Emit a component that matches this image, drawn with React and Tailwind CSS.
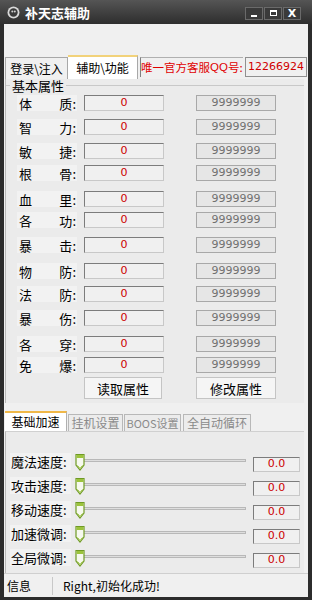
import React from "react";

const CN = { fontFamily: '"Noto Sans CJK SC", "Noto Sans", sans-serif' };
const NUM = { fontFamily: '"DejaVu Sans", "Liberation Sans", sans-serif' };
const LIB = { fontFamily: '"Liberation Sans", sans-serif' };

const attrs = [
  ["体", "质", "mt-[4px]"],
  ["智", "力", "mt-[8px]"],
  ["敏", "捷", "mt-[8px]"],
  ["根", "骨", "mt-[6px]"],
  ["血", "里", "mt-[10px]"],
  ["各", "功", "mt-[5px]"],
  ["暴", "击", "mt-[9px]"],
  ["物", "防", "mt-[10px]"],
  ["法", "防", "mt-[7px]"],
  ["暴", "伤", "mt-[8px]"],
  ["各", "穿", "mt-[10px]"],
  ["免", "爆", "mt-[5px]"],
];

const speeds = ["魔法速度:", "攻击速度:", "移动速度:", "加速微调:", "全局微调:"];

function Thumb() {
  return (
    <svg width="10" height="18" viewBox="0 0 10 18" className="absolute left-[-1px] top-0">
      <path d="M1 1.5 H9 V12 L5 17 L1 12 Z" fill="#f6f9ee" stroke="#6f9a24" strokeWidth="1.2" />
      <rect x="1.6" y="2" width="6.8" height="3" fill="#9cc43c" />
      <path d="M2.5 12.5 L5 15.5 L7.5 12.5" fill="none" stroke="#9cc43c" strokeWidth="1" />
    </svg>
  );
}

export default function App() {
  return (
    <div className="w-[312px] h-[600px] bg-[#2c2c2c] flex flex-col overflow-hidden" style={CN}>
      {/* title bar */}
      <div className="h-[25px] flex items-center bg-gradient-to-b from-[#555555] to-[#2e2e2e] relative">
        <svg width="13" height="13" viewBox="0 0 13 13" className="ml-[7px]">
          <circle cx="6.5" cy="6.5" r="6" fill="#d8d8d8" />
          <circle cx="6.5" cy="6.5" r="4.2" fill="#3a3a3a" />
          <circle cx="5.3" cy="5.5" r="1" fill="#cfcfcf" />
          <circle cx="7.8" cy="5.5" r="1" fill="#cfcfcf" />
        </svg>
        <span className="ml-[5px] text-white text-[13px] font-bold leading-none">补天志辅助</span>
        <div className="ml-auto mr-[11px] flex gap-[1px] mt-[2px]">
          <div className="w-[18px] h-[13px] border border-[#6a6a6a] bg-[#3a3a3a] flex items-end justify-center pb-[2px]">
            <div className="w-[6px] h-[2px] bg-white" />
          </div>
          <div className="w-[18px] h-[13px] border border-[#6a6a6a] bg-[#3a3a3a] flex items-center justify-center">
            <div className="w-[7px] h-[6px] border border-white border-t-2" />
          </div>
          <div className="w-[18px] h-[13px] border border-[#6a6a6a] bg-[#3a3a3a] flex items-center justify-center text-white text-[11px] font-bold leading-none" style={NUM}>
            X
          </div>
        </div>
      </div>

      {/* client */}
      <div className="flex-1 mx-[4px] mb-[3px] bg-[#f0f0f0] flex flex-col">
        <div className="h-[31px]" />
        {/* top tabs */}
        <div className="h-[24px] flex items-end">
          <div className="ml-[1px] w-[63px] h-[22px] border border-b-0 border-[#a8a8a8] bg-[#f0f0f0] flex items-center justify-center text-[12px] text-black whitespace-nowrap">
            登录\注入
          </div>
          <div className="w-[70px] h-[24px] border-t-2 border-t-[#f2d27a] border-r border-r-[#a8a8a8] bg-white flex items-center justify-center text-[12px] text-black whitespace-nowrap">
            辅助\功能
          </div>
          <div className="ml-[2px] mb-[2px] w-[103px] h-[20px] border-l border-l-[#808080] border-t border-t-[#b0b0b0] flex items-center text-[11.5px] text-[#e00000] leading-none whitespace-nowrap">
            唯一官方客服<span style={LIB}>QQ</span>号:
          </div>
          <div className="ml-[2px] mb-[2px] w-[62px] h-[20px] border border-[#909090] bg-[#f0f0f0] flex items-center justify-center text-[11px] text-[#d00000]" style={NUM}>
            12266924
          </div>
        </div>

        {/* top panel */}
        <div className="h-[324px] ml-[1px] mr-[4px] border-l border-[#b8b8b8] bg-[#ebebeb] flex flex-col">
          <div className="h-[12px] flex items-center">
            <div className="w-[4px] h-px bg-[#c8c8c8]" />
            <span className="px-[2px] text-[13px] leading-none text-black">基本属性</span>
            <div className="flex-1 h-px bg-[#c8c8c8]" />
          </div>
          {attrs.map(([a, b, mt], i) => (
            <div key={i} className={`flex items-center h-[16px] ${mt}`}>
              <div className="ml-[11px] w-[60px] h-[16px] bg-[#f2f2f2] flex items-center justify-between px-[2px] text-[13px] leading-none text-black">
                <span>{a}</span>
                <span className="mr-[-1px]">{b}:</span>
              </div>
              <div className="ml-[7px] w-[80px] h-[16px] border border-[#7c7c7c] border-r-[#c8c8c8] border-b-[#c8c8c8] bg-[#f0f0f0] flex items-center justify-center text-[11px] text-[#cc0000]" style={NUM}>
                0
              </div>
              <div className="ml-[32px] w-[80px] h-[16px] border border-[#a8a8a8] bg-[#e6e6e6] flex items-center justify-center text-[11px] text-[#707070]" style={NUM}>
                9999999
              </div>
            </div>
          ))}
          <div className="flex mt-[4px]">
            <button className="ml-[78px] w-[78px] h-[22px] border border-[#c4c4c4] bg-[#f5f5f5] text-[13px] text-black leading-none">
              读取属性
            </button>
            <button className="ml-[34px] w-[80px] h-[22px] border border-[#c4c4c4] bg-[#f5f5f5] text-[13px] text-black leading-none">
              修改属性
            </button>
          </div>
        </div>

        {/* bottom tabs */}
        <div className="h-[24px] flex items-end gap-[1px] mt-[4px]">
          <div className="ml-[1px] w-[62px] h-[20px] border-t-2 border-t-[#f0b848] border-r border-r-[#b0b0b0] bg-white flex items-center justify-center text-[12px] text-black whitespace-nowrap">
            基础加速
          </div>
          <div className="w-[55px] h-[17px] border border-b-0 border-[#b8b8b8] bg-[#ececec] flex items-center justify-center text-[12px] text-[#8a8a8a] whitespace-nowrap">
            挂机设置
          </div>
          <div className="w-[57px] h-[17px] border border-b-0 border-[#b8b8b8] bg-[#ececec] flex items-center justify-center text-[11px] text-[#8a8a8a] whitespace-nowrap">
            BOOS设置
          </div>
          <div className="ml-[1px] w-[68px] h-[17px] border border-b-0 border-[#b8b8b8] bg-[#ececec] flex items-center justify-center text-[12px] text-[#8a8a8a] whitespace-nowrap">
            全自动循环
          </div>
        </div>

        {/* bottom panel */}
        <div className="flex-1 ml-[1px] mr-[4px] border-l border-[#b8b8b8] border-t border-t-[#d0d0d0] bg-[#ebebeb] flex flex-col pt-[21px]">
          {speeds.map((s) => (
            <div key={s} className="h-[24px] flex items-start">
              <div className="ml-[4px] w-[61px] h-[17px] bg-[#f2f2f2] flex items-center pl-[1px] text-[13px] leading-none text-black whitespace-nowrap">
                {s}
              </div>
              <div className="ml-[5px] w-[170px] h-[18px] relative">
                <div className="absolute left-[4px] right-0 top-[6px] h-[3px] border border-[#b8b8b8] bg-[#dedede]" />
                <Thumb />
              </div>
              <div className="ml-[7px] mt-[4px] w-[47px] h-[15px] border border-[#7c7c7c] border-r-[#c8c8c8] border-b-[#c8c8c8] bg-[#f0f0f0] flex items-center justify-center text-[11px] text-[#cc0000]" style={NUM}>
                0.0
              </div>
            </div>
          ))}
        </div>

        {/* status bar */}
        <div className="h-[24px] border-t border-[#cfcfcf] bg-[#f0f0f0] flex items-center text-[12px] text-black">
          <span className="ml-[3px] w-[45px]">信息</span>
          <div className="w-px h-[18px] bg-[#c8c8c8]" />
          <span className="ml-[10px]">Right,初始化成功!</span>
        </div>
      </div>
    </div>
  );
}
